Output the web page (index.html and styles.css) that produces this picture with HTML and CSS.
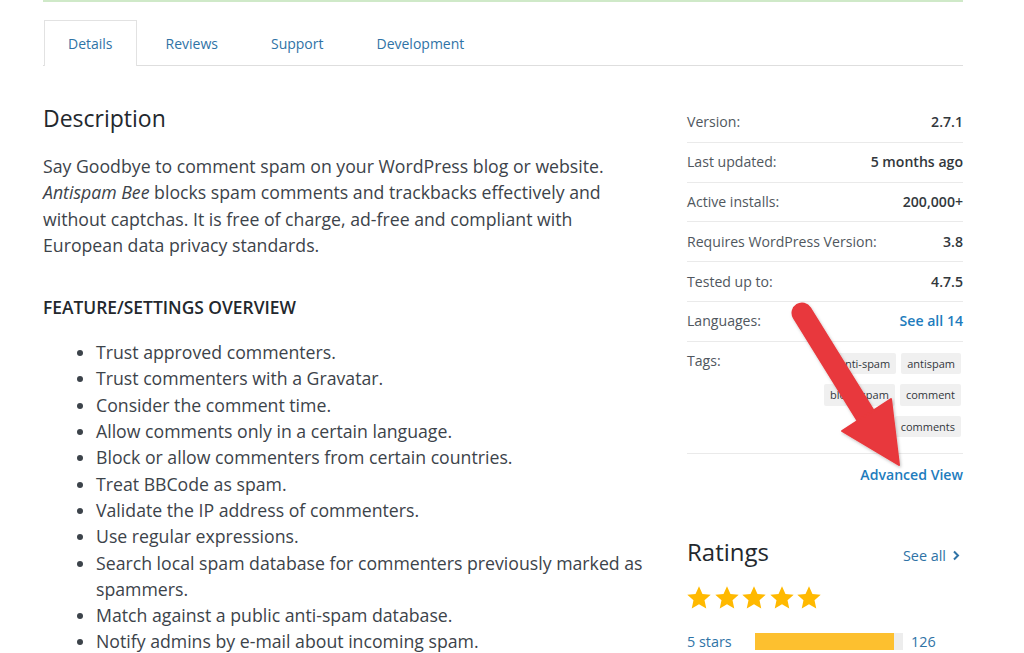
FILE: index.html
```html
<!DOCTYPE html>
<html lang="en">
<head>
<meta charset="utf-8">
<title>Antispam Bee</title>
<link rel="stylesheet" href="styles.css">
</head>
<body>
<div class="page">
  <div class="notice-edge"></div>
  <nav class="tabs">
    <a class="tab active" href="#">Details</a>
    <a class="tab" href="#">Reviews</a>
    <a class="tab" href="#">Support</a>
    <a class="tab" href="#">Development</a>
  </nav>
  <div class="content">
    <main class="entry-main">
      <h2 class="section-title">Description</h2>
      <p class="intro">Say Goodbye to comment spam on your WordPress blog or website. <em>Antispam Bee</em> blocks spam comments and trackbacks effectively and without captchas. It is free of charge, ad-free and compliant with European data privacy standards.</p>
      <h4 class="sub-title">FEATURE/SETTINGS OVERVIEW</h4>
      <ul class="features">
        <li>Trust approved commenters.</li>
        <li>Trust commenters with a Gravatar.</li>
        <li>Consider the comment time.</li>
        <li>Allow comments only in a certain language.</li>
        <li>Block or allow commenters from certain countries.</li>
        <li>Treat BBCode as spam.</li>
        <li>Validate the IP address of commenters.</li>
        <li>Use regular expressions.</li>
        <li>Search local spam database for commenters previously marked as spammers.</li>
        <li>Match against a public anti-spam database.</li>
        <li>Notify admins by e-mail about incoming spam.</li>
      </ul>
    </main>
    <aside class="entry-meta">
      <ul class="meta-list">
        <li class="meta-row"><span>Version:</span><strong>2.7.1</strong></li>
        <li class="meta-row"><span>Last updated:</span><strong>5 months ago</strong></li>
        <li class="meta-row"><span>Active installs:</span><strong>200,000+</strong></li>
        <li class="meta-row"><span>Requires WordPress Version:</span><strong>3.8</strong></li>
        <li class="meta-row"><span>Tested up to:</span><strong>4.7.5</strong></li>
        <li class="meta-row"><span>Languages:</span><a class="link-strong" href="#">See all 14</a></li>
        <li class="meta-row tags-row"><span>Tags:</span>
          <div class="tags">
            <a class="tag" href="#">anti-spam</a>
            <a class="tag" href="#">antispam</a>
            <a class="tag" href="#">block-spam</a>
            <a class="tag" href="#">comment</a>
            <a class="tag" href="#">comments</a>
          </div>
        </li>
      </ul>
      <div class="advanced"><a class="link-strong" href="#">Advanced View</a></div>

      <div class="ratings-head">
        <h3 class="section-title">Ratings</h3>
        <a class="see-all" href="#">See all <svg width="8" height="11" viewBox="0 0 8 11"><path d="M2 1.5l4 4-4 4" fill="none" stroke="currentColor" stroke-width="2"/></svg></a>
      </div>
      <div class="stars">
        <svg viewBox="0 0 24 24"><path d="M12 1.2l3.2 7 7.6.8-5.7 5.1 1.6 7.5L12 17.8l-6.7 3.8 1.6-7.5L1.2 9l7.6-.8z"/></svg>
        <svg viewBox="0 0 24 24"><path d="M12 1.2l3.2 7 7.6.8-5.7 5.1 1.6 7.5L12 17.8l-6.7 3.8 1.6-7.5L1.2 9l7.6-.8z"/></svg>
        <svg viewBox="0 0 24 24"><path d="M12 1.2l3.2 7 7.6.8-5.7 5.1 1.6 7.5L12 17.8l-6.7 3.8 1.6-7.5L1.2 9l7.6-.8z"/></svg>
        <svg viewBox="0 0 24 24"><path d="M12 1.2l3.2 7 7.6.8-5.7 5.1 1.6 7.5L12 17.8l-6.7 3.8 1.6-7.5L1.2 9l7.6-.8z"/></svg>
        <svg viewBox="0 0 24 24"><path d="M12 1.2l3.2 7 7.6.8-5.7 5.1 1.6 7.5L12 17.8l-6.7 3.8 1.6-7.5L1.2 9l7.6-.8z"/></svg>
      </div>
      <div class="rating-bar-row">
        <a class="rb-label" href="#">5 stars</a>
        <span class="rb-track"><span class="rb-fill" style="width:94%"></span></span>
        <a class="rb-count" href="#">126</a>
      </div>
    </aside>
  </div>
</div>
<svg class="annotation" width="1024" height="653" viewBox="0 0 1024 653">
  <defs>
    <filter id="sh" x="-20%" y="-20%" width="140%" height="140%">
      <feDropShadow dx="1" dy="1.5" stdDeviation="1.5" flood-color="#000" flood-opacity="0.25"/>
    </filter>
  </defs>
  <g filter="url(#sh)" fill="#e8383c" stroke="#e8383c">
    <line x1="802" y1="313" x2="867" y2="418" stroke-width="21" stroke-linecap="round"/>
    <polygon points="842,431 891,399 899,465" stroke-width="2" stroke-linejoin="round"/>
  </g>
</svg>
</body>
</html>
```
FILE: styles.css
```css
* { box-sizing: border-box; }
html, body { margin: 0; padding: 0; background: #fff; }
body {
  font-family: "Open Sans", "Noto Sans", sans-serif;
  color: #3c434a;
  overflow: hidden;
  height: 653px;
}
a { text-decoration: none; color: #0073aa; }

.page { width: 920px; margin-left: 43px; }
.notice-edge { height: 2px; background: #cfe9c8; }

.tabs {
  display: flex;
  gap: 5px;
  margin-top: 18px;
  border-bottom: 1px solid #dedede;
  height: 46px;
}
.tab {
  display: block;
  height: 46px;
  padding: 0 23px;
  line-height: 46px;
  font-size: 14px;
  color: #2f73a6;
  border: 1px solid transparent;
  border-bottom: none;
}
.tab.active {
  border-color: #e2e2e2;
  background: #fff;
  margin-left: 1px;
}

.content { display: flex; justify-content: space-between; }
.entry-main { width: 612px; }
.entry-meta { width: 276px; }

.section-title {
  font-size: 23px;
  font-weight: 500;
  line-height: 29px;
  color: #23282d;
  margin: 38px 0 0;
}
.intro {
  font-size: 17.7px;
  line-height: 26.3px;
  margin: 20px 0 0;
  color: #3c434a;
}
.sub-title {
  font-size: 17.4px;
  font-weight: 600;
  line-height: 26px;
  color: #23282d;
  margin: 36px 0 0;
}
.features {
  margin: 19px 0 0;
  padding-left: 53px;
  font-size: 17.7px;
  line-height: 26.3px;
}

.meta-list { list-style: none; margin: 37px 0 0; padding: 0; }
.meta-row {
  display: flex;
  justify-content: space-between;
  align-items: flex-start;
  font-size: 14.1px;
  line-height: 20px;
  padding: 9.4px 0;
  border-bottom: 1px solid #eaeaea;
  color: #50575e;
}
.meta-row strong { font-weight: 600; color: #32373c; }
.link-strong { font-weight: 600; color: #1e7cbd; }

.tags-row { padding-bottom: 16px; }
.tags {
  width: 150px;
  display: flex;
  flex-wrap: wrap;
  justify-content: flex-end;
  gap: 10px 5px;
  margin-top: 1.5px;
  margin-right: 2px;
}
.tag {
  font-size: 11px;
  line-height: 15.6px;
  padding: 3px 6px;
  background: #f0f0f0;
  color: #32373c;
  border-radius: 2px;
}

.advanced {
  text-align: right;
  font-size: 14.1px;
  line-height: 20px;
  padding: 11px 0 9px;
}

.ratings-head {
  display: flex;
  justify-content: space-between;
  align-items: baseline;
  margin-top: 43px;
}
.ratings-head .section-title { margin: 0; font-size: 24px; }
.see-all { font-size: 14.4px; color: #2f73a6; display: flex; align-items: center; gap: 6px; margin-right: 3px; }
.see-all svg { display: block; }

.stars { display: flex; gap: 1.5px; margin-top: 19px; margin-left: -1px; }
.stars svg { width: 26px; height: 26px; fill: #ffb900; display: block; }

.rating-bar-row {
  display: flex;
  align-items: center;
  margin-top: 21px;
  font-size: 14.4px;
}
.rb-label { width: 68px; color: #2f73a6; }
.rb-track { width: 148px; height: 17px; background: #ededed; display: block; }
.rb-fill { display: block; height: 100%; background: #fdc02f; }
.rb-count { margin-left: 8px; color: #2f73a6; }

.annotation { position: absolute; left: 0; top: 0; pointer-events: none; }
```
